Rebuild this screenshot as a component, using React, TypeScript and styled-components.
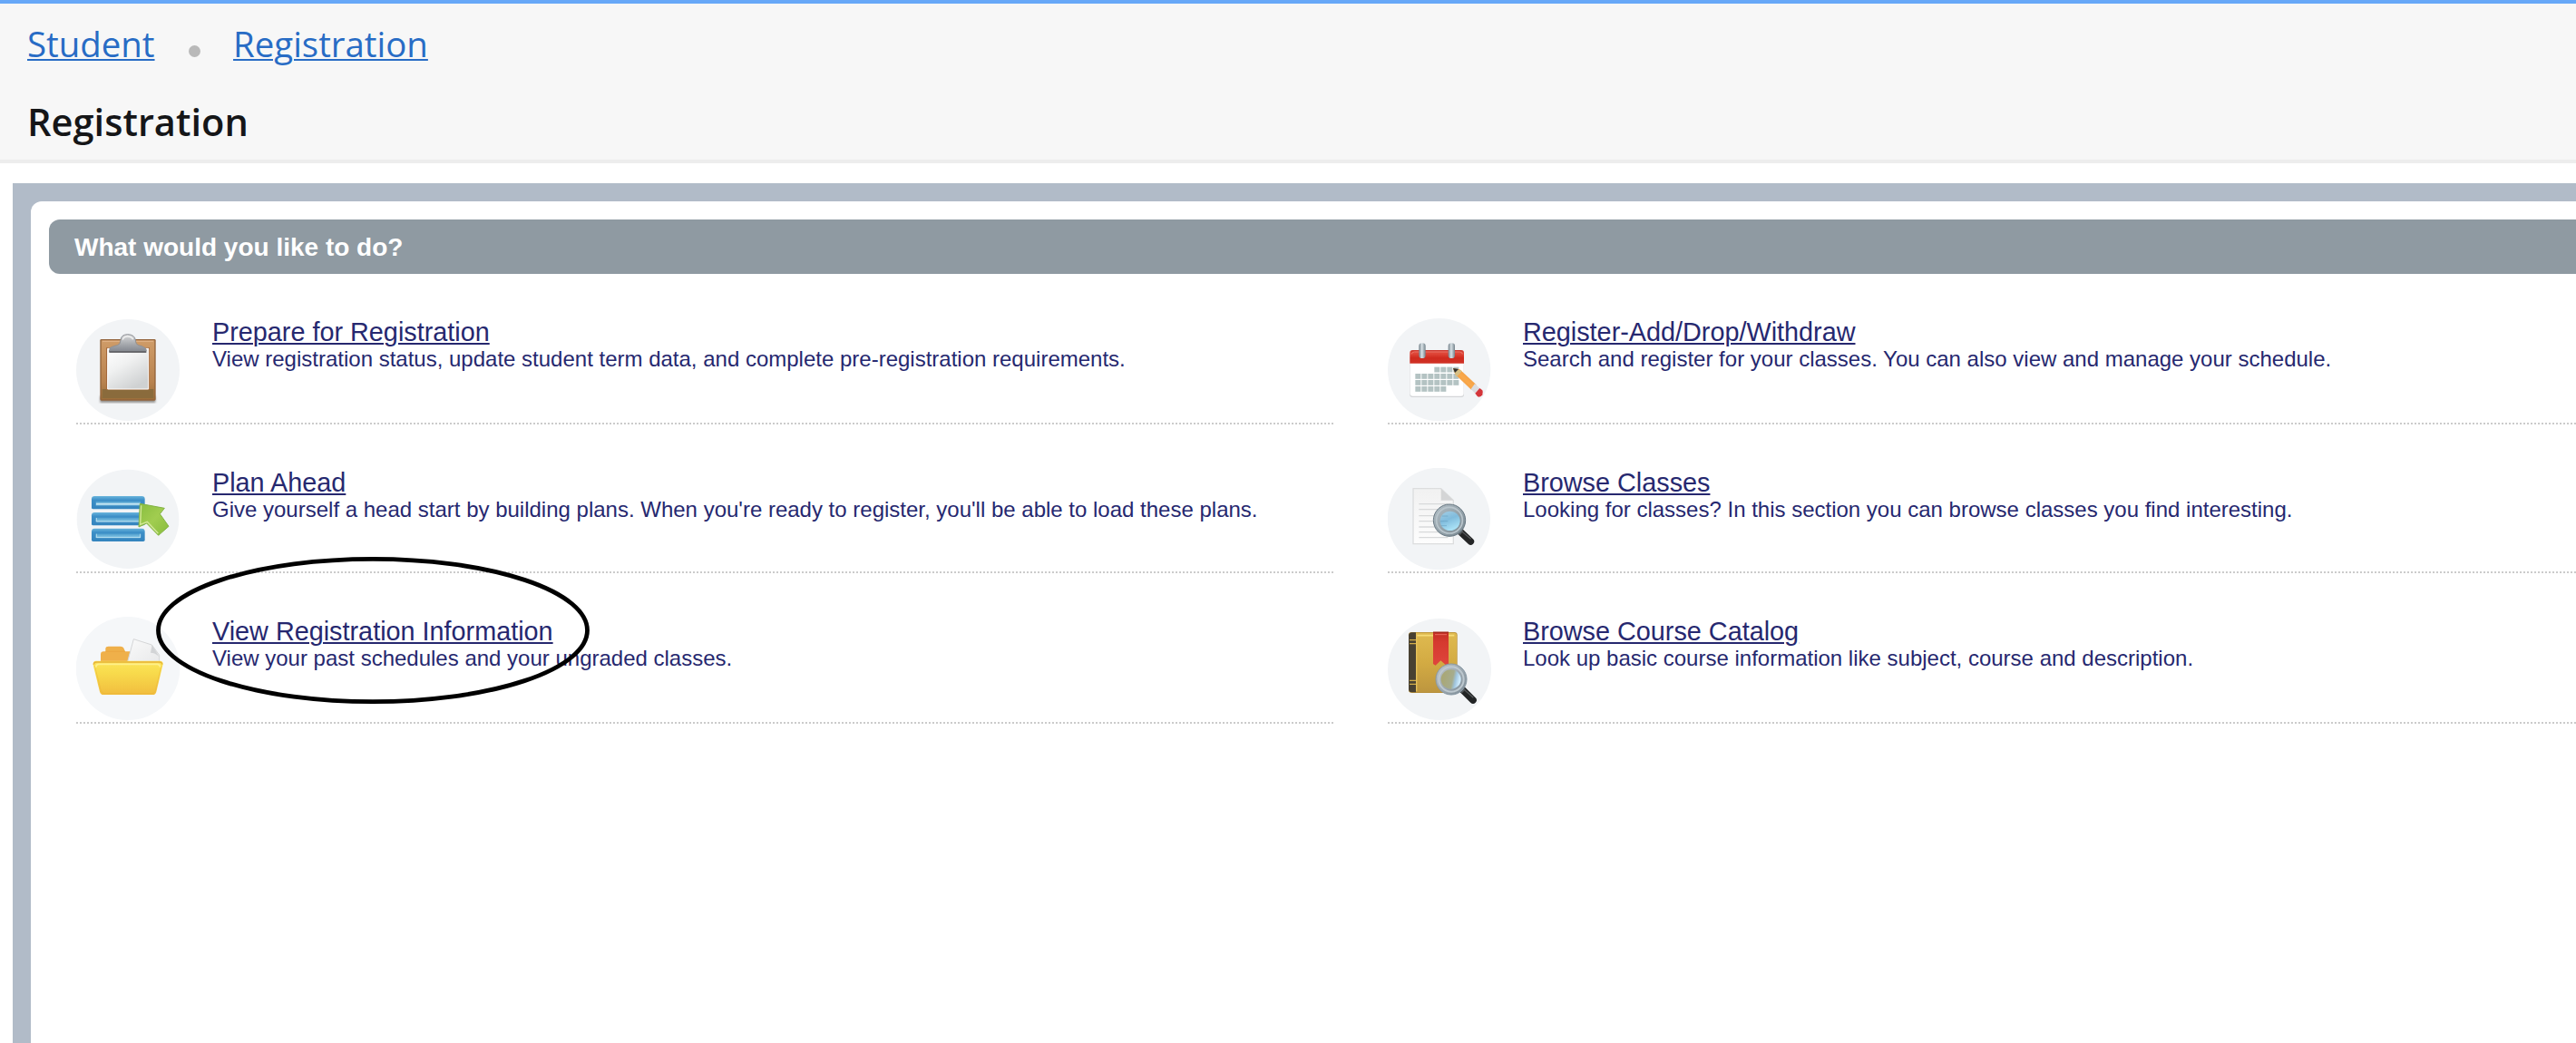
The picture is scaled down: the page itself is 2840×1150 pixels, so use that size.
import React from 'react';
import styled, { createGlobalStyle } from 'styled-components';

const GlobalStyle = createGlobalStyle`
  html, body { margin: 0; padding: 0; background: #fff; overflow: hidden; }
  * { box-sizing: border-box; }
`;

const Page = styled.div`
  width: 2840px;
  height: 1150px;
  overflow: hidden;
  display: flex;
  flex-direction: column;
  background: #fff;
  font-family: 'Liberation Sans', Arial, sans-serif;
`;

const Header = styled.header`
  flex: none;
  height: 180px;
  padding: 18px 30px 0;
  background: #f7f7f7;
  border-top: 4px solid #67a8f8;
  border-bottom: 4px solid #ededed;
  font-family: 'Open Sans', sans-serif;
`;

const Breadcrumbs = styled.nav`
  display: flex;
  align-items: center;
  height: 52px;
`;

const Crumb = styled.a`
  font-size: 38.4px;
  line-height: 52px;
  color: #286cc5;
  text-decoration: underline;
  text-decoration-thickness: 2px;
  text-underline-offset: 2px;
`;

const Separator = styled.span`
  width: 13px;
  height: 13px;
  margin: 16px 36px 0 37.5px;
  border-radius: 50%;
  background: #b9b9b9;
`;

const PageTitle = styled.h1`
  margin: 32px 0 0;
  font-size: 41.6px;
  line-height: 56px;
  font-weight: 600;
  color: #151618;
`;

const Frame = styled.main`
  flex: 1;
  margin: 22px 0 0 14px;
  padding: 20px 0 0 20px;
  background: #b1bbc8;
  display: flex;
`;

const Panel = styled.section`
  flex: 1;
  min-width: 0;
  padding: 20px 0 0 20px;
  background: #fff;
  border-top-left-radius: 12px;
`;

const PanelHeading = styled.h2`
  margin: 0;
  height: 60px;
  padding-left: 28px;
  border-radius: 12px 0 0 12px;
  background: #8f9aa2;
  color: #fff;
  font-size: 28px;
  line-height: 61px;
  font-weight: 700;
`;

const Options = styled.div`
  display: grid;
  grid-template-columns: 1386px 1386px;
  grid-template-rows: 166px 164px 166px;
  column-gap: 60px;
  padding-left: 30px;
`;

const Option = styled.article`
  position: relative;
  display: flex;
  align-items: flex-start;
  gap: 30px;
  padding-top: 48px;
  border-bottom: 2px dotted #cbcbcb;

  &:nth-child(even) {
    gap: 29px;
  }
`;

const Icon = styled.svg`
  flex: none;
  width: 120px;
  height: 116px;
`;

const OptionText = styled.div`
  display: flex;
  flex-direction: column;
  align-items: flex-start;
  color: #26286f;
`;

const OptionLink = styled.a`
  font-size: 28.8px;
  line-height: 32px;
  text-decoration: underline;
  text-decoration-thickness: 2px;
  text-underline-offset: 2px;
`;

const Description = styled.p`
  margin: 0;
  font-size: 24px;
  line-height: 28px;
  white-space: nowrap;
`;

const Highlight = styled.svg`
  position: absolute;
  left: 86px;
  top: -20px;
  width: 482px;
  height: 166px;
  pointer-events: none;
`;

const ClipboardIcon = () => (
  <Icon viewBox="42 30 360 348">
    <defs>
      <linearGradient id="wood" x1="0" y1="0" x2="0" y2="1">
        <stop offset="0" stopColor="#cf9c68" /><stop offset=".7" stopColor="#b8824e" /><stop offset="1" stopColor="#9b6f3a" />
      </linearGradient>
      <linearGradient id="sheet" x1="0" y1="0" x2=".6" y2="1">
        <stop offset="0" stopColor="#fff" /><stop offset=".45" stopColor="#f0f1f1" /><stop offset="1" stopColor="#cfd1d2" />
      </linearGradient>
      <linearGradient id="clip" x1="0" y1="0" x2="0" y2="1">
        <stop offset="0" stopColor="#dadbdc" /><stop offset=".6" stopColor="#a5a8ad" /><stop offset="1" stopColor="#858991" />
      </linearGradient>
      <filter id="soft"><feGaussianBlur stdDeviation="3" /></filter>
    </defs>
    <ellipse cx="213" cy="204" rx="171" ry="168" fill="#f2f4f6" />
    <rect x="121" y="290" width="183" height="22" fill="#56524d" opacity=".6" filter="url(#soft)" />
    <rect x="123" y="104" width="180" height="199" rx="2" fill="url(#wood)" stroke="#92633a" strokeWidth="4" />
    <path d="M129 109H297" stroke="#deb083" strokeWidth="4" />
    <path d="M128 267H298V297H128z" fill="#8a6b3c" />
    <path d="M141 130H285V269H141z" fill="#a4683a" />
    <path d="M146 133H281V267H146z" fill="url(#sheet)" stroke="#fff" strokeWidth="3" />
    <path d="M151 137V146H274V137z" fill="#3f3f43" />
    <path d="M153 132Q156 127 178 122Q189 119 189 105Q190 87 212 86Q236 87 238 105Q238 119 248 122Q270 127 273 135V141H153z" fill="url(#clip)" stroke="#8d9095" strokeWidth="3" />
    <path d="M196 104Q199 93 212 93Q226 93 230 103" fill="none" stroke="#f0f0f0" strokeWidth="4" />
  </Icon>
);

const PlanIcon = () => (
  <Icon viewBox="42 48 360 348">
    <defs>
      <linearGradient id="bar" x1="0" y1="0" x2="0" y2="1">
        <stop offset="0" stopColor="#69b4dc" /><stop offset=".3" stopColor="#3d8fc7" /><stop offset="1" stopColor="#3484be" />
      </linearGradient>
      <linearGradient id="barCore" x1="0" y1="0" x2="0" y2="1">
        <stop offset="0" stopColor="#4b9ccd" /><stop offset="1" stopColor="#8dcbe6" />
      </linearGradient>
      <linearGradient id="green" x1="0" y1="0" x2="1" y2="1">
        <stop offset="0" stopColor="#88bd3f" /><stop offset=".5" stopColor="#a1cd50" /><stop offset="1" stopColor="#87bc3c" />
      </linearGradient>
    </defs>
    <ellipse cx="213" cy="217" rx="169" ry="164" fill="#f2f4f6" />
    {[141, 195, 248].map((y, i) => (
      <g key={y}>
        <path d={`M98 ${y + 43}Q93 ${y + 43} 93 ${y + 38}V${y + 10}Q93 ${y} 103 ${y}H259Q269 ${y} 269 ${y + 10}V${y + 38}Q269 ${y + 43} 264 ${y + 43}z`} fill="url(#bar)" />
        <rect x="107" y={y + 17} width="148" height="14" fill="url(#barCore)" />
        <path d={i === 0 ? `M108 ${y + 26}H254` : `M109 ${y + 18}V${y + 30}H254V${y + 18}`} fill="none" stroke="#c4e4f2" strokeWidth={i === 0 ? 5 : 2.5} />
      </g>
    ))}
    <path d="M253 166L334 181L319 200L348 241L314 271L275 231L249 243z" fill="url(#green)" stroke="#83b345" strokeWidth="3" strokeLinejoin="round" />
    <path d="M257 172L254 235L277 226L313 264" fill="none" stroke="#d3e89a" strokeWidth="4" />
  </Icon>
);

const FolderIcon = () => (
  <Icon viewBox="42 45 360 348">
    <defs>
      <linearGradient id="folder" x1="0" y1="0" x2="0" y2="1">
        <stop offset="0" stopColor="#fbe55a" /><stop offset=".35" stopColor="#f8db4c" /><stop offset="1" stopColor="#f1bd3e" />
      </linearGradient>
      <linearGradient id="page" x1="0" y1="0" x2="1" y2="1">
        <stop offset="0" stopColor="#fafafa" /><stop offset="1" stopColor="#e8e9ea" />
      </linearGradient>
    </defs>
    <ellipse cx="213" cy="216" rx="172" ry="171" fill="#f5f7f9" />
    <path d="M123 200V170Q123 160 133 160H139V150Q140 143 149 143H188Q198 143 200 151L204 160H222V200z" fill="#efb04a" />
    <path d="M139 160H204" stroke="#e8a33c" strokeWidth="2" />
    <path d="M211 197L232 119L292 138L317 172V197z" fill="url(#page)" stroke="#d5d6d7" strokeWidth="3" />
    <path d="M293 138L288 164Q303 164 316 177z" fill="#d2d4d6" />
    <path d="M107 191H320Q330 192 329 202L307 293Q304 303 296 303H132Q123 303 120 293L98 204Q97 192 107 191z" fill="url(#folder)" />
    <path d="M103 207L124 290Q127 299 136 299H293Q300 299 304 290L324 207" fill="none" stroke="#e9b135" strokeWidth="2" opacity=".7" />
    <path d="M100 203Q100 195 110 195H317Q327 195 326 203" fill="none" stroke="#e7b338" strokeWidth="4" />
    <path d="M107 212Q108 202 116 202H311Q319 202 320 212" fill="none" stroke="#fff08a" strokeWidth="5" />
  </Icon>
);

const CALENDAR_ROWS = [
  { y: 194, from: 3, to: 7 },
  { y: 216, from: 0, to: 7 },
  { y: 237, from: 0, to: 7 },
  { y: 258, from: 0, to: 5 },
];

const CalendarIcon = () => (
  <Icon viewBox="45 30 360 348">
    <defs>
      <linearGradient id="red" x1="0" y1="0" x2="0" y2="1">
        <stop offset="0" stopColor="#c9352c" /><stop offset=".25" stopColor="#e0483a" /><stop offset=".6" stopColor="#cf2a1e" /><stop offset="1" stopColor="#d03327" />
      </linearGradient>
      <linearGradient id="ring" x1="0" y1="0" x2="1" y2="0">
        <stop offset="0" stopColor="#717f88" /><stop offset=".45" stopColor="#d9e2e6" /><stop offset="1" stopColor="#72818a" />
      </linearGradient>
      <linearGradient id="pencil" x1="0" y1="1" x2="1" y2="0">
        <stop offset="0" stopColor="#e9892f" /><stop offset=".5" stopColor="#f9a94c" /><stop offset="1" stopColor="#ea8a2d" />
      </linearGradient>
    </defs>
    <ellipse cx="215" cy="203" rx="170" ry="170" fill="#f2f4f6" />
    <rect x="118" y="145" width="179" height="149" rx="8" fill="#d4d6d8" />
    <path d="M119 178H296V281Q296 290 287 290H128Q119 290 119 281z" fill="#fff" />
    <path d="M118 182V147Q118 138 127 138H288Q297 138 297 147V182z" fill="url(#red)" />
    <path d="M124 151Q125 144 133 144H283Q291 144 292 151" fill="none" stroke="#ed786c" strokeWidth="3" />
    <rect x="148" y="115" width="22" height="50" rx="10" fill="url(#ring)" />
    <rect x="245" y="115" width="22" height="50" rx="10" fill="url(#ring)" />
    {CALENDAR_ROWS.map(({ y, from, to }) =>
      Array.from({ length: to - from }, (_, i) => (
        <rect key={`${y}-${i}`} x={136 + (from + i) * 21} y={y} width="18" height="17.5" fill="#b4c3c3" />
      )),
    )}
    <path d="M261 198L283 202L338 253L322 270L268 218z" fill="url(#pencil)" />
    <path d="M261 198L291 207L272 227z" fill="#d6bf85" />
    <path d="M261 198L279 201L267 213z" fill="#30302e" />
    <path d="M333 249L349 264L334 281L320 267z" fill="#dadcdf" />
    <path d="M349 264L358 271Q361 276 358 286Q354 293 346 293Q341 292 334 281z" fill="#d4353a" />
  </Icon>
);

const SearchPageIcon = () => (
  <Icon viewBox="45 48 360 348">
    <defs>
      <linearGradient id="paper" x1="0" y1="0" x2="0" y2="1">
        <stop offset="0" stopColor="#f1f1f1" /><stop offset="1" stopColor="#fdfdfd" />
      </linearGradient>
      <linearGradient id="glass" x1="0" y1="0" x2=".4" y2="1">
        <stop offset="0" stopColor="#a5cee4" /><stop offset=".5" stopColor="#80bcdd" /><stop offset="1" stopColor="#a8e0f5" />
      </linearGradient>
      <linearGradient id="rim" x1="0" y1="0" x2="1" y2="1">
        <stop offset="0" stopColor="#b4c0c7" /><stop offset="1" stopColor="#77868f" />
      </linearGradient>
    </defs>
    <ellipse cx="214" cy="216" rx="170" ry="169" fill="#f2f4f6" />
    <path d="M129 116H221L262 155V299H129z" fill="url(#paper)" stroke="#dcddde" strokeWidth="4" strokeLinejoin="round" />
    <path d="M221 116V155H262z" fill="#d4d5d6" />
    <path d="M148 167H244M148 185H244M148 206H244M148 224H244M148 243H244M148 260H244M148 278H244" stroke="#d8d9da" strokeWidth="4" />
    <path d="M285 259L319 291" stroke="#242526" strokeWidth="23" strokeLinecap="round" />
    <path d="M279 255L289 264" stroke="#53575a" strokeWidth="18" />
    <path d="M291 259L320 283" stroke="#55575a" strokeWidth="4" />
    <circle cx="249" cy="221" r="53" fill="url(#rim)" stroke="#697984" strokeWidth="3" />
    <circle cx="249" cy="221" r="43" fill="none" stroke="#b9c5cc" strokeWidth="5" />
    <ellipse cx="251" cy="223" rx="33" ry="32" fill="url(#glass)" />
    <path d="M219 224H244M224 207H244M222 239H240" stroke="#659dbd" strokeWidth="3" opacity=".6" />
  </Icon>
);

const CatalogIcon = () => (
  <Icon viewBox="45 45 360 348">
    <defs>
      <linearGradient id="cover" x1="0" y1="0" x2="0" y2="1">
        <stop offset="0" stopColor="#dfba50" /><stop offset=".5" stopColor="#d3ab43" /><stop offset="1" stopColor="#bd963f" />
      </linearGradient>
      <linearGradient id="ribbon" x1="0" y1="0" x2="0" y2="1">
        <stop offset="0" stopColor="#c22f24" /><stop offset=".3" stopColor="#d5392f" /><stop offset="1" stopColor="#df453c" />
      </linearGradient>
      <linearGradient id="lens" x1="0" y1="0" x2="1" y2=".2">
        <stop offset="0" stopColor="#aaa66f" /><stop offset=".65" stopColor="#a6ac8d" /><stop offset=".8" stopColor="#9fc4dd" /><stop offset="1" stopColor="#cdeafb" />
      </linearGradient>
      <linearGradient id="rim2" x1="0" y1="0" x2="1" y2="1">
        <stop offset="0" stopColor="#c1c8cd" /><stop offset="1" stopColor="#7b8a95" />
      </linearGradient>
    </defs>
    <ellipse cx="216" cy="219" rx="171" ry="168" fill="#f2f4f6" />
    <rect x="114" y="96" width="161" height="201" rx="10" fill="#b78f38" />
    <path d="M135 98H264Q273 98 273 107V286Q273 294 265 294H135z" fill="url(#cover)" />
    <path d="M139 107H265" stroke="#f6dc77" strokeWidth="5" />
    <path d="M140 100V292" stroke="#e7c35c" strokeWidth="4" />
    <path d="M126 97H138V295H126Q114 295 114 284V108Q114 97 126 97z" fill="#484132" />
    <path d="M117 122H138M117 134H138M117 256H138M117 268H138" stroke="#d3ae49" strokeWidth="3.5" />
    <path d="M195 95H246V205H237L220 190L203 206L195 201z" fill="url(#ribbon)" />
    <path d="M195 97H246" stroke="#a4281e" strokeWidth="4" />
    <path d="M201 104H240" stroke="#ea6a5e" strokeWidth="3" />
    <path d="M293 287L327 321" stroke="#222425" strokeWidth="23" strokeLinecap="round" />
    <path d="M285 281L296 292" stroke="#53585c" strokeWidth="18" />
    <path d="M299 287L328 313" stroke="#55585a" strokeWidth="4" />
    <circle cx="255" cy="252" r="51" fill="url(#rim2)" stroke="#8798a4" strokeWidth="3" />
    <circle cx="255" cy="252" r="41" fill="none" stroke="#bdc8cf" strokeWidth="6" />
    <ellipse cx="254" cy="252" rx="33" ry="32" fill="url(#lens)" />
  </Icon>
);

interface OptionData {
  title: string;
  description: string;
  Glyph: React.FC;
  highlighted?: boolean;
}

const OPTIONS: OptionData[] = [
  { title: 'Prepare for Registration', description: 'View registration status, update student term data, and complete pre-registration requirements.', Glyph: ClipboardIcon },
  { title: 'Register-Add/Drop/Withdraw', description: 'Search and register for your classes. You can also view and manage your schedule.', Glyph: CalendarIcon },
  { title: 'Plan Ahead', description: "Give yourself a head start by building plans. When you're ready to register, you'll be able to load these plans.", Glyph: PlanIcon },
  { title: 'Browse Classes', description: 'Looking for classes? In this section you can browse classes you find interesting.', Glyph: SearchPageIcon },
  { title: 'View Registration Information', description: 'View your past schedules and your ungraded classes.', Glyph: FolderIcon, highlighted: true },
  { title: 'Browse Course Catalog', description: 'Look up basic course information like subject, course and description.', Glyph: CatalogIcon },
];

export default function App() {
  return (
    <>
      <GlobalStyle />
      <Page>
        <Header>
          <Breadcrumbs>
            <Crumb>Student</Crumb>
            <Separator />
            <Crumb>Registration</Crumb>
          </Breadcrumbs>
          <PageTitle>Registration</PageTitle>
        </Header>
        <Frame>
          <Panel>
            <PanelHeading>What would you like to do?</PanelHeading>
            <Options>
              {OPTIONS.map(({ title, description, Glyph, highlighted }) => (
                <Option key={title}>
                  <Glyph />
                  <OptionText>
                    <OptionLink>{title}</OptionLink>
                    <Description>{description}</Description>
                  </OptionText>
                  {highlighted && (
                    <Highlight viewBox="0 0 482 166">
                      <ellipse cx="241" cy="83" rx="236.5" ry="78.7" fill="none" stroke="#000" strokeWidth="4.8" />
                    </Highlight>
                  )}
                </Option>
              ))}
            </Options>
          </Panel>
        </Frame>
      </Page>
    </>
  );
}
